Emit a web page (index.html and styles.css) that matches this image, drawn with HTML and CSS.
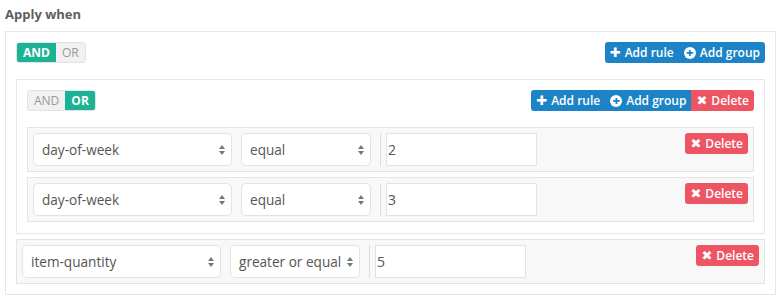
FILE: index.html
```html
<!DOCTYPE html>
<html lang="en">
  <head>
    <meta charset="utf-8">
    <title>Apply when</title>
    <link rel="stylesheet" href="styles.css">
  </head>
  <body>
    <div class="label">Apply when</div>

    <div class="group">
      <div class="group-header">
        <div class="toggle">
          <span class="toggle-btn active">AND</span>
          <span class="toggle-btn">OR</span>
        </div>
        <div class="btn-group">
          <span class="btn btn-blue"><span class="ico">&#x271A;</span>Add rule</span>
          <span class="btn btn-blue"><span class="ico-circle">+</span>Add group</span>
        </div>
      </div>

      <div class="group-body">
        <div class="group">
          <div class="group-header">
            <div class="toggle">
              <span class="toggle-btn">AND</span>
              <span class="toggle-btn active">OR</span>
            </div>
            <div class="btn-group">
              <span class="btn btn-blue"><span class="ico">&#x271A;</span>Add rule</span>
              <span class="btn btn-blue"><span class="ico-circle">+</span>Add group</span>
              <span class="btn btn-red"><span class="ico">&#x2716;</span>Delete</span>
            </div>
          </div>
          <div class="group-body">
            <div class="rule">
              <div class="select wide">day-of-week</div>
              <div class="select narrow">equal</div>
              <div class="value"><div class="input">2</div></div>
              <span class="btn btn-red single"><span class="ico">&#x2716;</span>Delete</span>
            </div>
            <div class="rule">
              <div class="select wide">day-of-week</div>
              <div class="select narrow">equal</div>
              <div class="value"><div class="input">3</div></div>
              <span class="btn btn-red single"><span class="ico">&#x2716;</span>Delete</span>
            </div>
          </div>
        </div>

        <div class="rule">
          <div class="select wide">item-quantity</div>
          <div class="select narrow">greater or equal</div>
          <div class="value"><div class="input">5</div></div>
          <span class="btn btn-red single"><span class="ico">&#x2716;</span>Delete</span>
        </div>
      </div>
    </div>
  </body>
</html>
```

FILE: styles.css
```css
body {
  margin: 0;
  padding: 5px 7px 0 5px;
  font-family: "Open Sans", "Liberation Sans", sans-serif;
  font-size: 13px;
  color: #676a6c;
  background: #fff;
}
.label {
  font-weight: 700;
  color: #5e5e5e;
  line-height: 18px;
  margin-bottom: 8px;
}
.group {
  border: 1px solid #e7e7e7;
  background: #fff;
  padding: 10px;
}
.group-header {
  display: flex;
  justify-content: space-between;
  align-items: flex-start;
  height: 21px;
  margin-bottom: 16px;
}
.group-body {
  display: flex;
  flex-direction: column;
  gap: 5px;
}
.group .group {
  padding-bottom: 11px;
}
.toggle {
  display: flex;
  border: 1px solid #e2e2e2;
  border-radius: 3px;
  overflow: hidden;
  height: 21px;
  box-sizing: border-box;
}
.toggle-btn {
  padding: 0 6px;
  line-height: 19px;
  font-size: 12px;
  color: #999;
  background: #f1f1f1;
}
.toggle-btn.active {
  background: #1ab394;
  color: #fff;
  font-weight: 700;
}
.btn-group {
  display: flex;
  border-radius: 3px;
  overflow: hidden;
}
.btn {
  display: inline-flex;
  align-items: center;
  height: 21px;
  padding: 0 5px;
  font-size: 12px;
  font-weight: 600;
  color: #fff;
  white-space: nowrap;
  box-sizing: border-box;
}
.btn-blue {
  background: #1c84c6;
}
.btn-red {
  background: #ed5565;
}
.btn.single {
  border-radius: 3px;
  margin-left: auto;
}
.ico {
  font-size: 13px;
  margin-right: 4px;
  font-family: "DejaVu Sans", sans-serif;
}
.ico-circle {
  display: inline-block;
  width: 12px;
  height: 12px;
  border-radius: 50%;
  background: #fff;
  color: #1c84c6;
  font-size: 13px;
  font-weight: 800;
  line-height: 11px;
  text-align: center;
  margin-right: 4px;
}
.rule {
  display: flex;
  align-items: flex-start;
  border: 1px solid #e4e4e4;
  background: #f8f8f8;
  padding: 5px;
}
.select {
  position: relative;
  height: 33px;
  box-sizing: border-box;
  border: 1px solid #e3e3e3;
  border-radius: 5px;
  background: #fff;
  line-height: 31px;
  padding-left: 8px;
  font-size: 13.6px;
  color: #555;
  margin-right: 9px;
  white-space: nowrap;
}
.select::before,
.select::after {
  content: "";
  position: absolute;
  right: 6px;
  border-left: 3px solid transparent;
  border-right: 3px solid transparent;
}
.select::before {
  top: 11px;
  border-bottom: 4px solid #777;
}
.select::after {
  top: 17px;
  border-top: 4px solid #777;
}
.select.wide {
  width: 199px;
}
.select.narrow {
  width: 130px;
}
.value {
  border-left: 1px solid #ddd;
  padding-left: 5px;
  height: 33px;
}
.input {
  width: 151px;
  height: 33px;
  box-sizing: border-box;
  border: 1px solid #e3e3e3;
  background: #fff;
  line-height: 31px;
  padding-left: 1px;
  font-size: 14px;
  color: #555;
}
```
